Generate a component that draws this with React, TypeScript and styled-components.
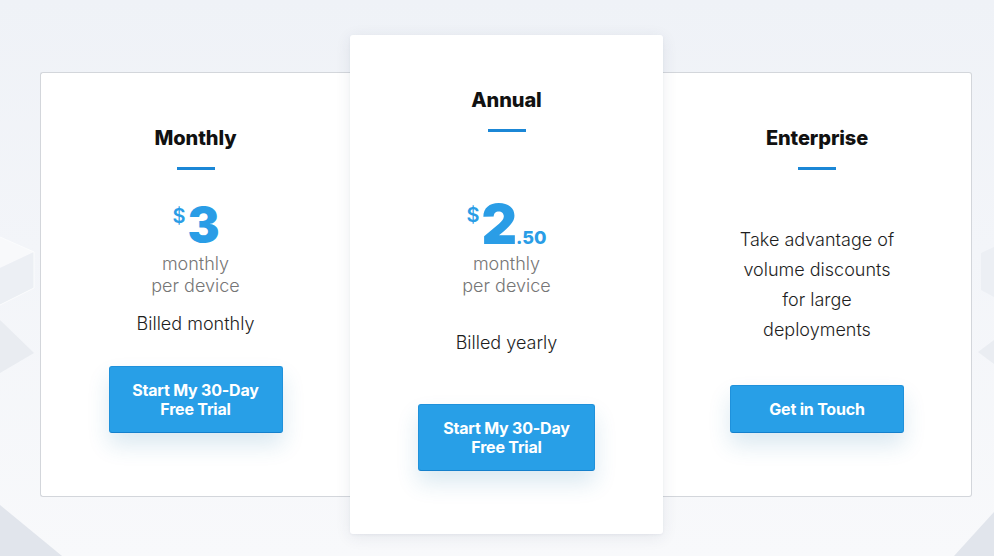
import React from 'react';
import styled, { createGlobalStyle } from 'styled-components';

const GlobalStyle = createGlobalStyle`
  html, body {
    margin: 0;
    padding: 0;
  }
  body {
    font-family: Inter, "Noto Sans", "Liberation Sans", sans-serif;
    -webkit-font-smoothing: antialiased;
  }
`;

const Page = styled.div`
  position: relative;
  width: 994px;
  height: 556px;
  overflow: hidden;
  background: linear-gradient(180deg, #eff2f7 0%, #f3f5f9 45%, #f8f9fb 100%);
`;

const Backdrop = styled.svg`
  position: absolute;
  inset: 0;
  width: 100%;
  height: 100%;
`;

const Plans = styled.div`
  position: relative;
  display: flex;
  align-items: center;
  padding: 35px 0 0 40px;
`;

type Side = 'left' | 'featured' | 'right';

const Card = styled.div<{ $side: Side; $width: number }>`
  box-sizing: border-box;
  width: ${p => p.$width}px;
  height: ${p => (p.$side === 'featured' ? 499 : 425)}px;
  display: flex;
  flex-direction: column;
  align-items: center;
  background: #fff;
  padding-top: 53px;
  border: 1px solid #d3d6db;
  border-radius: 3px;

  ${p => p.$side === 'left' && `
    border-right: none;
    border-radius: 3px 0 0 3px;
  `}
  ${p => p.$side === 'right' && `
    border-left: none;
    border-radius: 0 3px 3px 0;
  `}
  ${p => p.$side === 'featured' && `
    border: none;
    position: relative;
    z-index: 1;
    box-shadow: 0 3px 16px rgba(40, 60, 90, 0.09), 0 1px 3px rgba(40, 60, 90, 0.05);
  `}
`;

const Title = styled.h2`
  margin: 0;
  font-size: 20px;
  line-height: 24px;
  font-weight: 800;
  color: #111;
  letter-spacing: -0.1px;
`;

const Rule = styled.div`
  width: 38px;
  height: 3px;
  margin-top: 17px;
  background: #1b87d6;
`;

const PriceRow = styled.div<{ $top: number; $bottom: number }>`
  display: flex;
  align-items: baseline;
  margin-top: ${p => p.$top}px;
  margin-bottom: ${p => p.$bottom}px;
  color: #2a9de6;
`;

const Currency = styled.span<{ $offset: number }>`
  align-self: flex-start;
  font-size: 20px;
  line-height: 1;
  font-weight: 600;
  margin-top: ${p => p.$offset}px;
  margin-right: 2px;
`;

const Amount = styled.span<{ $size: number }>`
  font-size: ${p => p.$size}px;
  line-height: 1;
  font-weight: 900;
  letter-spacing: -1px;
`;

const Cents = styled.span`
  font-size: 18px;
  line-height: 1;
  font-weight: 800;
`;

const Unit = styled.div`
  font-size: 18px;
  line-height: 22px;
  font-weight: 300;
  color: #767676;
  text-align: center;
`;

const Billing = styled.div<{ $top: number }>`
  margin-top: ${p => p.$top}px;
  font-size: 18px;
  line-height: 22px;
  font-weight: 300;
  color: #1e1e1e;
`;

const Blurb = styled.p`
  margin: 55px 0 0;
  max-width: 160px;
  font-size: 18px;
  line-height: 30px;
  font-weight: 300;
  color: #1e1e1e;
  text-align: center;
`;

const Button = styled.button<{ $top: number; $width: number; $height: number }>`
  box-sizing: border-box;
  margin-top: ${p => p.$top}px;
  width: ${p => p.$width}px;
  height: ${p => p.$height}px;
  padding: 0 12px;
  background: #289fe7;
  border: 1px solid #1f91db;
  border-bottom-color: #1580cc;
  border-radius: 3px;
  color: #fff;
  font-family: inherit;
  font-size: 16px;
  line-height: 19px;
  font-weight: 700;
  letter-spacing: -0.2px;
  cursor: pointer;
  box-shadow: 0 12px 22px rgba(30, 120, 170, 0.16);
`;

const App: React.FC = () => {
  return (
    <Page>
      <GlobalStyle />
      <Backdrop viewBox="0 0 994 556" preserveAspectRatio="none">
        <polygon points="0,237 34,252 0,268" fill="#f8f9fb" />
        <polygon points="0,268 34,252 34,288 0,305" fill="#eceff4" />
        <polyline points="0,237 34,252 34,288 0,305" fill="none" stroke="#fbfcfd" strokeWidth="1" />
        <polygon points="0,320 34,353 0,373" fill="#e9ecf1" />
        <polygon points="0,505 62,556 0,556" fill="#e1e5ec" />
        <polygon points="994,247 981,253 981,290 994,297" fill="#eceff4" />
        <polygon points="994,340 978,352 994,364" fill="#eaedf2" />
        <polygon points="954,556 994,512 994,556" fill="#e1e5ec" />
      </Backdrop>

      <Plans>
        <Card $side="left" $width={310}>
          <Title>Monthly</Title>
          <Rule />
          <PriceRow $top={31} $bottom={4}>
            <Currency $offset={5}>$</Currency>
            <Amount $size={48}>3</Amount>
          </PriceRow>
          <Unit>
            monthly
            <br />
            per device
          </Unit>
          <Billing $top={16}>Billed monthly</Billing>
          <Button $top={31} $width={174} $height={67}>
            Start My 30-Day
            <br />
            Free Trial
          </Button>
        </Card>

        <Card $side="featured" $width={313}>
          <Title>Annual</Title>
          <Rule />
          <PriceRow $top={65} $bottom={1}>
            <Currency $offset={8}>$</Currency>
            <Amount $size={55}>2</Amount>
            <Cents>.50</Cents>
          </PriceRow>
          <Unit>
            monthly
            <br />
            per device
          </Unit>
          <Billing $top={35}>Billed yearly</Billing>
          <Button $top={50} $width={177} $height={67}>
            Start My 30-Day
            <br />
            Free Trial
          </Button>
        </Card>

        <Card $side="right" $width={309}>
          <Title>Enterprise</Title>
          <Rule />
          <Blurb>Take advantage of volume discounts for large deployments</Blurb>
          <Button $top={40} $width={174} $height={48}>
            Get in Touch
          </Button>
        </Card>
      </Plans>
    </Page>
  );
};

export default App;
